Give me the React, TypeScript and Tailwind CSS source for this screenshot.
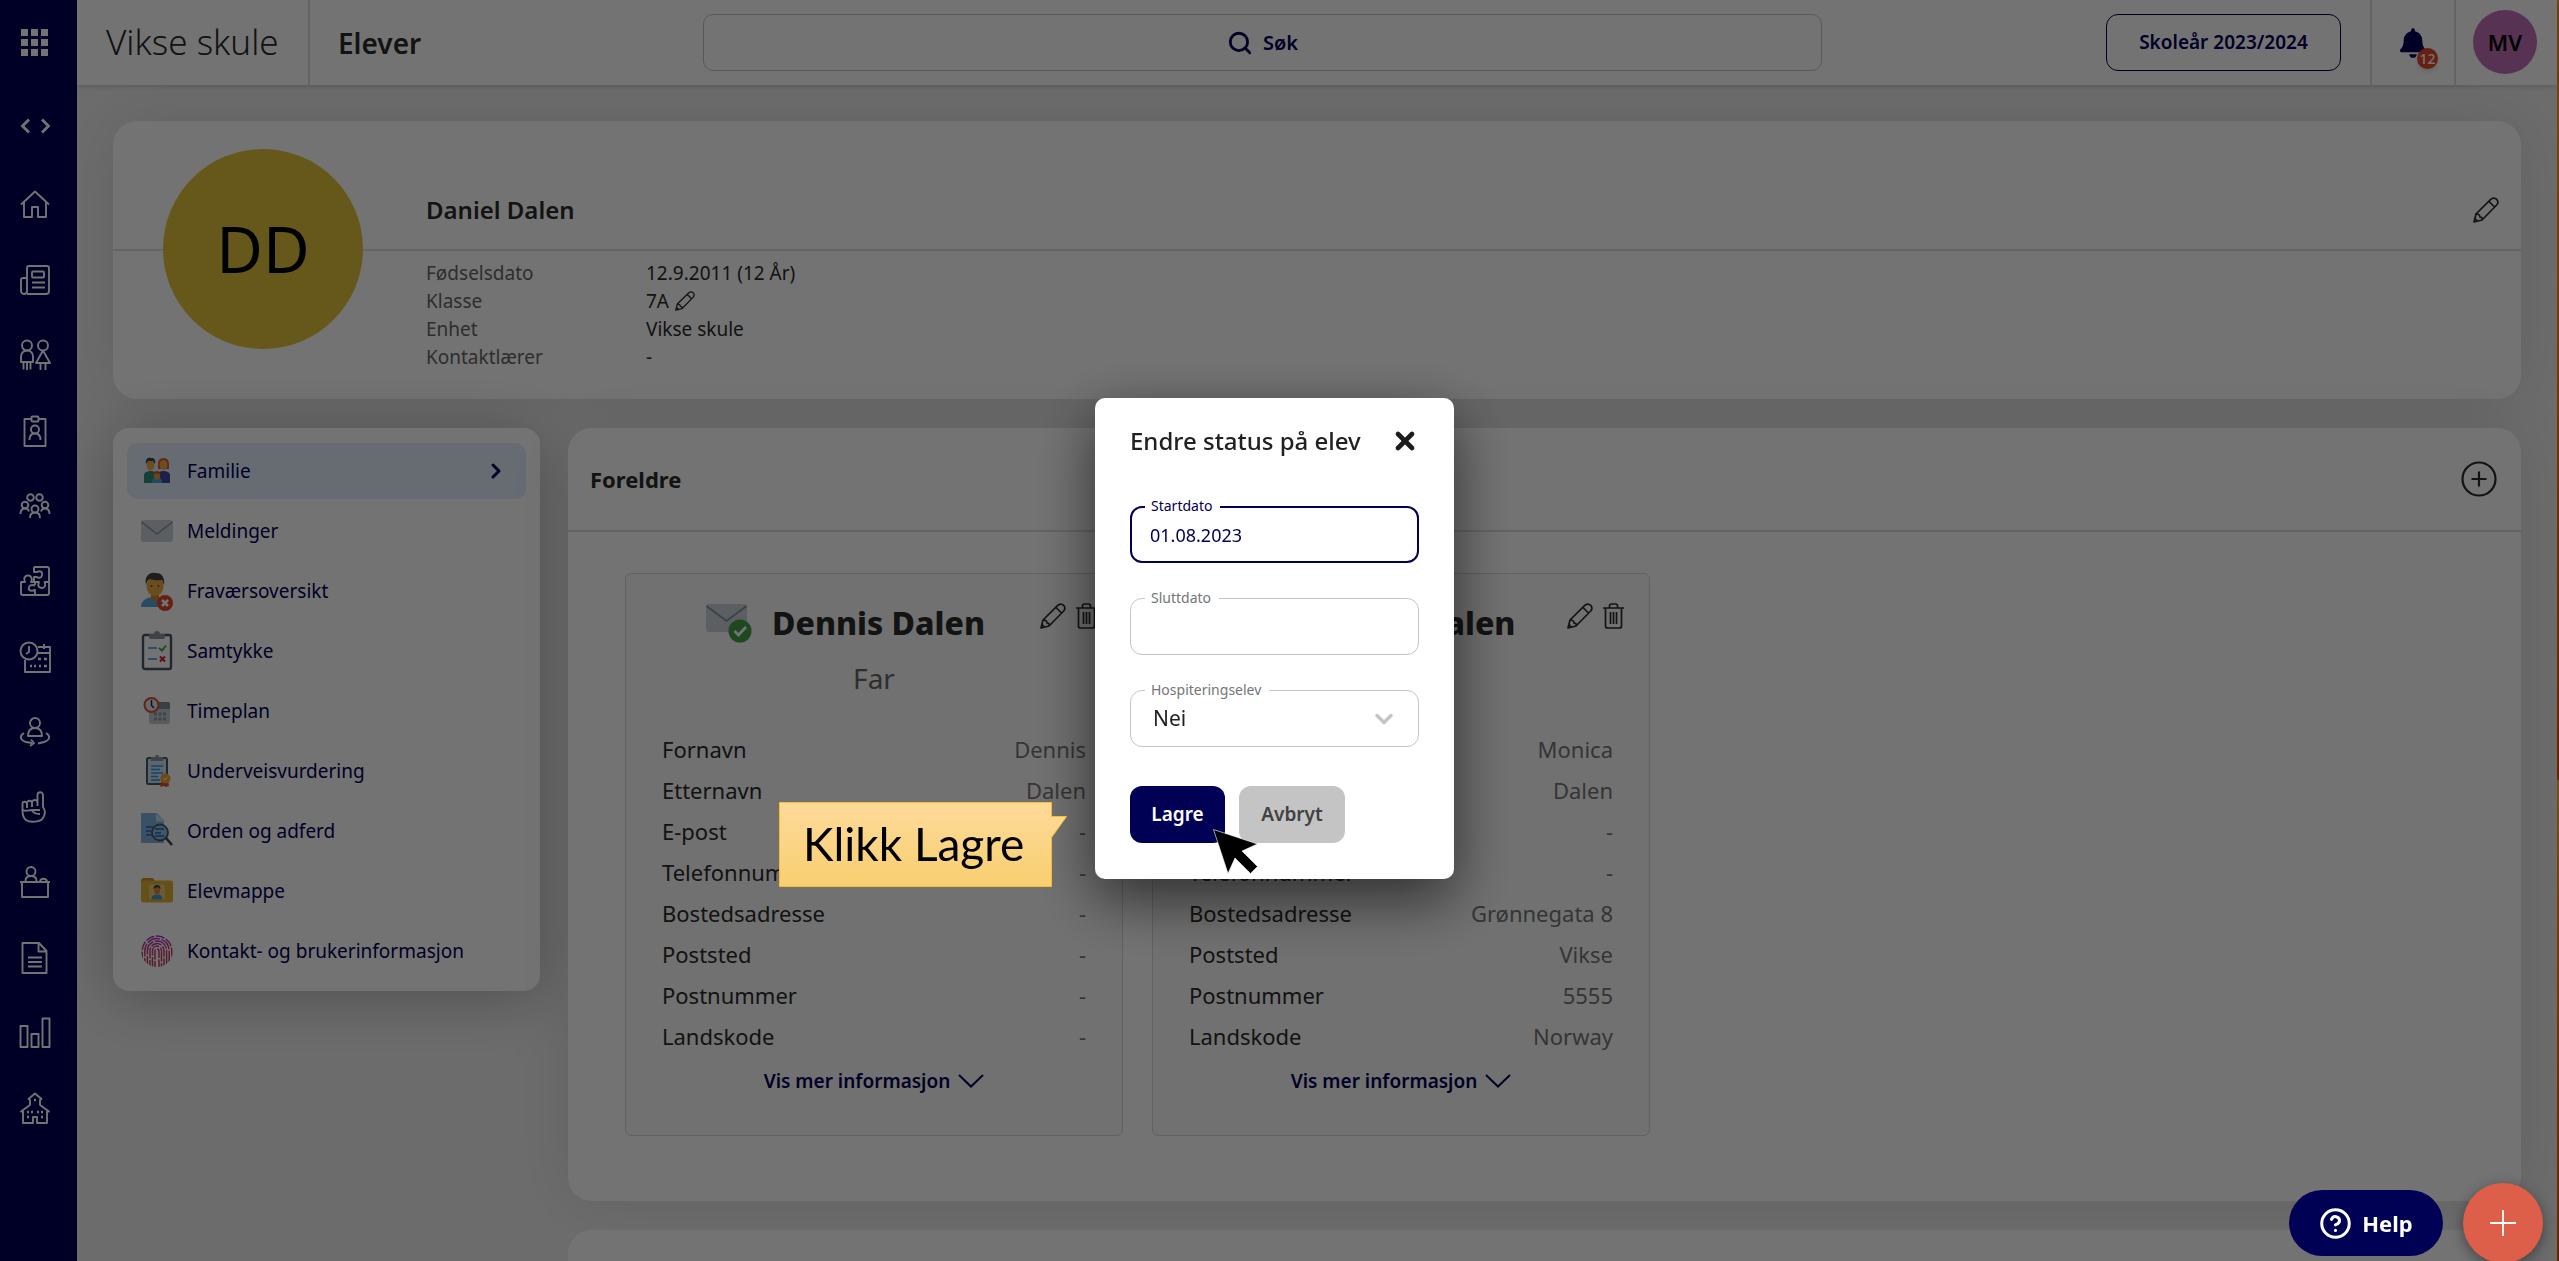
import type { ReactNode } from 'react';
import { ChevronDown, ChevronRight, CircleHelp, Search, X } from 'lucide-react';
import { FaBell } from 'react-icons/fa';

interface NavItem {
  label: string;
  icon: ReactNode;
}

interface Parent {
  name: string;
  relation: string;
  fields: [string, string][];
}

const navItems: NavItem[] = [
  {
    label: 'Hjem',
    icon: <path d="M2 15.500 16 2.500l14 13M5 13v15h8V18h6v10h8V13" />,
  },
  {
    label: 'Nyheter',
    icon: (
      <>
        <path d="M9 30h19a3 3 0 0 0 3-3V4a2 2 0 0 0-2-2H11a2 2 0 0 0-2 2v23a3 3 0 0 1-6 0V16a2 2 0 0 1 2-2h4" transform="translate(-1 0)" />
        <rect x="13" y="7.500" width="12" height="6" rx="1" />
        <path d="M13 18.500h13M13 23.500h13" />
      </>
    ),
  },
  {
    label: 'Elever',
    icon: (
      <>
        <circle cx="8" cy="6.500" r="5" />
        <circle cx="24" cy="6.500" r="5" />
        <path d="M8 11.500c-4 0-6 3-6 6.500v5h2.500v7.500M8 11.500c4 0 6 3 6 6.500v5h-2.500v7.500M4.500 23h7M8 24v7M24 11.500l-7 12.500h14l-7-12.500M21.500 24v7M26.500 24v7" />
      </>
    ),
  },
  {
    label: 'Ansatte',
    icon: (
      <>
        <path d="M12 4H5.500v27h21V4H20" />
        <rect x="12.500" y="1.500" width="7" height="5" rx="1" />
        <circle cx="16" cy="14.500" r="4" />
        <path d="M10.500 25c0-4.500 2-6.500 5.500-6.500s5.500 2 5.500 6.500" />
      </>
    ),
  },
  {
    label: 'Grupper',
    icon: (
      <>
        <circle cx="11.500" cy="7.500" r="3.300" />
        <circle cx="20.500" cy="7.500" r="3.300" />
        <circle cx="6" cy="15" r="3.300" />
        <circle cx="26" cy="15" r="3.300" />
        <circle cx="16" cy="19" r="3.500" />
        <path d="M1.500 24c0-3.500 1.500-5.500 4.500-5.500 2 0 3.500 1 4 3M30.500 24c0-3.500-1.500-5.500-4.500-5.500-2 0-3.500 1-4 3M11 28c0-3.500 1.500-5.500 5-5.500s5 2 5 5.500" />
      </>
    ),
  },
  {
    label: 'Fag',
    icon: (
      <>
        <path d="M15 2h13a2 2 0 0 1 2 2v24a2 2 0 0 1-2 2H4a2 2 0 0 1-2-2V17h4c-2-4 0-6.500 3-6.500s5 3 3 6.500h4v3" />
        <path d="M15 2v5h3c4-2 6 1 5 3.500-1 3-4 2.500-5 1.500h-3v5h5c-2 5 1 6 3 6 3 0 4-3 2.500-6H30M16 30v-5c-5 2-7-.5-6-3 .8-2 3-2.500 6-1.500" />
      </>
    ),
  },
  {
    label: 'Timeplan',
    icon: (
      <>
        <circle cx="10" cy="10" r="8.500" />
        <path d="M10 5v6l-3 2M19 6h12v25H6V19M18 12h13M25 3v5" />
        <path d="M19 18h3M25 18h3M11 25h2M15 25h2M20 25h2M25 25h3" strokeWidth="2.500" />
      </>
    ),
  },
  {
    label: 'Vikar',
    icon: (
      <>
        <circle cx="16" cy="7" r="5" />
        <path d="M9 20c0-5 2-8 7-8s7 3 7 8zM5 17c-5 3-4 7 2 9l6 1M27 17c5 3 4 7-2 9l-6 1.500M12 23.500l3 3.500-4 3" />
      </>
    ),
  },
  {
    label: 'Vurdering',
    icon: (
      <path d="M18.500 15V4a2.700 2.700 0 0 1 5.500 0v12c3 4 2 8 0 11-2 4-13 5-17 2-4-3-3.500-7-3.500-11v-5c0-3 4-3 4.500 0v4M8 12c.5-3 5-3 5 0v4M13 11c1-3 5-2.500 5.500 0M4 19c3 2 6 0 9 0h8M13 19c1 3 4 4 8 4" />
    ),
  },
  {
    label: 'SFO',
    icon: (
      <>
        <circle cx="12" cy="5.500" r="4.500" />
        <path d="M6.500 15c0-3.500 2-5 5.500-5s5.500 1.500 5.500 5M21 15c1-3 6-3 7 0M1 16h30M3 16v15h26V16" />
      </>
    ),
  },
  {
    label: 'Dokumenter',
    icon: <path d="M3.500 1H20l7.500 8v22h-24zM19.500 1v8.500h8M9 15.500h14M9 20h14M9 24.500h14" />,
  },
  {
    label: 'Rapporter',
    icon: <path d="M1.500 9h7v21h-7zM12.500 17h7v13h-7zM23.500 1.500h7V30h-7z" />,
  },
  {
    label: 'Skole',
    icon: (
      <>
        <path d="M16 1.500 9.500 7l1.500 1v5L2 19.500h2V31h10v-6h4v6h10V19.500h2L21 13V8l1.500-1z" />
        <path d="M15 8h2M8 20h2M12 20h2M18 20h2M22 20h2M8 25h2M22 25h2" strokeWidth="2.500" />
      </>
    ),
  },
];

const menuItems: NavItem[] = [
  {
    label: 'Familie',
    icon: (
      <>
        <path d="M3 32V24q0-3 5-4h3q5 1 5 4v8z" fill="#2f8f7c" />
        <path d="M16 32v-8q0-3 5-4h3q5 1 5 4v8z" fill="#4447a8" />
        <path d="M17 18V13q0-6 5.500-6T28 13v5z" fill="#e8552b" />
        <ellipse cx="9.500" cy="14" rx="4" ry="5.500" fill="#f0a84a" />
        <ellipse cx="22.500" cy="14" rx="4" ry="5" fill="#f0a84a" />
        <path d="M5 13c-1-6 3-7 5-6 3-.5 5 2 4 6l-2-3H7z" fill="#444" />
        <path d="M11 32v-2q0-3 5-3t5 3v2z" fill="#45a9d8" />
        <ellipse cx="16" cy="25" rx="3.200" ry="3.800" fill="#e89b4a" />
        <path d="M12.500 24q0-4 3.500-4t3.500 4l-2-1.500h-3z" fill="#d8562b" />
      </>
    ),
  },
  {
    label: 'Meldinger',
    icon: (
      <>
        <rect x="0" y="9" width="32" height="22" rx="2.500" fill="#c9d3da" />
        <path d="m.5 11 15.500 12L31.500 11" fill="none" stroke="#7c8d9c" strokeWidth="1.300" />
      </>
    ),
  },
  {
    label: 'Fraværsoversikt',
    icon: (
      <>
        <path d="M0 36c0-7 6-10 14-10s13 3 14 10z" fill="#55a8e0" />
        <path d="M10 21h8v7q-4 4-8 0z" fill="#d68b30" />
        <ellipse cx="14" cy="15.500" rx="8.500" ry="9.500" fill="#eda944" />
        <path d="M5 14C3 5 9 1 14 2c7-1 10 5 9 12l-2-5q-7 1-12-1-3 1-4 6" fill="#424242" />
        <circle cx="10.500" cy="15" r=".9" fill="#6d4420" />
        <circle cx="17.500" cy="15" r=".9" fill="#6d4420" />
        <circle cx="24" cy="32" r="8" fill="#e0482a" />
        <path d="m21 29 6 6m0-6-6 6" stroke="#fff" strokeWidth="2.600" />
      </>
    ),
  },
  {
    label: 'Samtykke',
    icon: (
      <>
        <rect x="2" y="4" width="28" height="34" rx="2" fill="none" stroke="#465a66" strokeWidth="2.400" />
        <path d="M8 3h5a3 3 0 0 1 6 0h5v3q0 2-2 2H10Q8 8 8 6z" fill="#8795a1" />
        <path d="M7 17h9M7 28h9" stroke="#2b95e6" strokeWidth="1.600" />
        <path d="m18 17 3 2.500 4-5" stroke="#43a047" strokeWidth="2" fill="none" />
        <path d="m19 25.500 5 5m0-5-5 5" stroke="#d81b43" strokeWidth="2" />
      </>
    ),
  },
  {
    label: 'Timeplan',
    icon: (
      <>
        <rect x="8" y="11" width="21" height="22" rx="2" fill="#c5cdd3" />
        <path d="M8 17v-4q0-2 2-2h17q2 0 2 2v5H8z" fill="#808d98" />
        <path d="M13 23h12M13 28h12" stroke="#8a98a3" strokeWidth="3" strokeDasharray="3 1.500" />
        <circle cx="10.500" cy="14" r="7" fill="#e8e8e8" stroke="#d94f3c" strokeWidth="2" />
        <path d="M10.500 9v5.500l2.500 2.500" stroke="#20205c" strokeWidth="1.500" fill="none" />
      </>
    ),
  },
  {
    label: 'Underveisvurdering',
    icon: (
      <>
        <rect x="6" y="7" width="20" height="26" rx="1.500" fill="#cfe2f0" stroke="#465a66" strokeWidth="2" />
        <path d="M10 6h4a2 2 0 0 1 4 0h4v4H10z" fill="#8795a1" />
        <path d="M10 15h12M10 18.500h9M10 22h12M10 25.500h7M10 29h9" stroke="#2b95e6" strokeWidth="1.400" />
        <path d="m21 29-2 7 4-1 2 1 3-1-1-6z" fill="#d8562b" />
        <circle cx="24.500" cy="27.500" r="5" fill="#f0a230" />
        <path d="m22.500 27.500 1.500 1.500 2.500-3" stroke="#fff3c4" fill="none" />
      </>
    ),
  },
  {
    label: 'Orden og adferd',
    icon: (
      <>
        <path d="M0 2h16l7 8v22H0z" fill="#7fb2e0" />
        <path d="m15 2 8 8.500h-8z" fill="#c5def2" />
        <path d="M5 16h7M5 20h5M5 24h7" stroke="#2c62b0" strokeWidth="1.500" />
        <circle cx="19" cy="21.500" r="8" fill="#8fc0ec" stroke="#4a5560" strokeWidth="1.800" />
        <path d="M14 18h9M14 22h6M14 25h9" stroke="#2c62b0" strokeWidth="1.600" />
        <path d="m25 27 6 7" stroke="#3c444c" strokeWidth="2.600" />
      </>
    ),
  },
  {
    label: 'Elevmappe',
    icon: (
      <>
        <path d="M0 10q0-3 3-3h9l2 3h8v10H0z" fill="#d98c2c" />
        <rect x="0" y="9.500" width="32" height="22" rx="2.500" fill="#e0b334" />
        <rect x="8" y="13.500" width="16" height="15" rx="1.500" fill="#eac976" />
        <path d="M10.500 28.500q0-5 5.500-5t5.500 5z" fill="#3f9bd0" />
        <ellipse cx="16" cy="19.500" rx="3" ry="4" fill="#d58c43" />
        <path d="M12.500 18q0-4 3.500-4t3.500 4l-2-1.500h-3z" fill="#444" />
      </>
    ),
  },
  {
    label: 'Kontakt- og brukerinformasjon',
    icon: (
      <>
        <defs>
          <linearGradient id="print" gradientUnits="userSpaceOnUse" x1="0" x2="0" y1="4" y2="36">
            <stop offset="0" stopColor="#b030d0" />
            <stop offset="0.500" stopColor="#c83c78" />
            <stop offset="1" stopColor="#b8404c" />
          </linearGradient>
          <clipPath id="finger">
            <ellipse cx="16" cy="20" rx="16" ry="16" />
          </clipPath>
        </defs>
        <g fill="none" stroke="url(#print)" strokeWidth="1.500" clipPath="url(#finger)">
          <path d="M1.200 40V20a14.800 15 0 0 1 29.600 0v20" strokeDasharray="9 1.500" />
          <path d="M3.800 40V20a12.200 12.400 0 0 1 24.400 0v20" strokeDasharray="13 1.500" />
          <path d="M6.400 40V20a9.600 10 0 0 1 19.200 0v20" strokeDasharray="15 1.500" />
          <path d="M9 40V20a7 7.500 0 0 1 14 0v20" strokeDasharray="11 1.500" />
          <path d="M11.500 40V20a4.500 5 0 0 1 9 0v20" strokeDasharray="14 1.500" />
          <path d="M14 40V20.500a2 2.500 0 0 1 4 0V40" strokeDasharray="10 1.500" />
        </g>
      </>
    ),
  },
];

const parents: Parent[] = [
  {
    name: 'Dennis Dalen',
    relation: 'Far',
    fields: [
      ['Fornavn', 'Dennis'],
      ['Etternavn', 'Dalen'],
      ['E-post', '-'],
      ['Telefonnummer', '-'],
      ['Bostedsadresse', '-'],
      ['Poststed', '-'],
      ['Postnummer', '-'],
      ['Landskode', '-'],
    ],
  },
  {
    name: 'Monica Dalen',
    relation: 'Mor',
    fields: [
      ['Fornavn', 'Monica'],
      ['Etternavn', 'Dalen'],
      ['E-post', '-'],
      ['Telefonnummer', '-'],
      ['Bostedsadresse', 'Grønnegata 8'],
      ['Poststed', 'Vikse'],
      ['Postnummer', '5555'],
      ['Landskode', 'Norway'],
    ],
  },
];

function Pencil({ className }: { className: string }) {
  return (
    <svg viewBox="0 0 26 26" className={className} fill="none" stroke="currentColor" strokeWidth="1.700" strokeLinejoin="round">
      <path d="M1 25l2-8L18 2.200q3-2.400 5.700.2 2.400 2.800 0 5.600L9 23zM16 4.500l5.500 5.500M3 17c3 0 4 1 4 3 2 0 2.500 1 2 3M1 25l3.500-1-2.500-2.500z" />
    </svg>
  );
}

function Trash() {
  return (
    <svg viewBox="0 0 21 26" className="w-[21px] h-[26px]" fill="none" stroke="currentColor" strokeWidth="1.700">
      <path d="M0 5h21M2.500 5v18q0 2 2 2h12q2 0 2-2V5M6.500 5V3q0-2 2-2h4q2 0 2 2v2M7.500 9v12M10.500 9v12M13.500 9v12" />
    </svg>
  );
}

function Sidebar() {
  return (
    <nav className="w-[77px] shrink-0 h-full bg-[#000055] text-white flex flex-col pb-[115px]">
      <button aria-label="Apper" className="h-[85px] pl-[21px]">
        <svg viewBox="0 0 27 27" className="w-[27px] h-[27px]" fill="currentColor">
          {[0, 10, 20].map((y) =>
            [0, 10, 20].map((x) => <rect key={`${x}-${y}`} x={x} y={y} width="7" height="7" />)
          )}
        </svg>
      </button>
      <button aria-label="Utvid meny" className="h-[82px] pl-5">
        <svg viewBox="0 0 32 16" className="w-8 h-4" fill="none" stroke="currentColor" strokeWidth="2.800">
          <path d="M9 1.500 2.500 8 9 14.500M22 1.500 28.500 8 22 14.500" />
        </svg>
      </button>
      {navItems.map((item) => (
        <a key={item.label} href="#" aria-label={item.label} className="flex-1 flex items-center pl-[19px]">
          <svg viewBox="0 0 32 32" className="w-8 h-8" fill="none" stroke="currentColor" strokeWidth="1.900" strokeLinejoin="round">
            {item.icon}
          </svg>
        </a>
      ))}
    </nav>
  );
}

function Header() {
  return (
    <header className="relative z-[1] flex h-[85px] bg-white shadow-[0_1px_6px_rgba(0,0,0,0.2)]">
      <div className="w-[233px] flex items-center pl-[29px] border-r-2 border-[#dddddd] text-[35px] font-light text-[#2b2b2b]">
        Vikse skule
      </div>
      <h1 className="w-[393px] flex items-center pl-7 text-[28px] font-semibold text-[#2b2b2b]">Elever</h1>
      <button className="flex-1 my-[14px] rounded-[10px] border border-[#c4c4c4] flex items-center justify-center gap-[10px] text-xl font-semibold text-[#000055]">
        <Search className="w-[26px] h-[26px]" strokeWidth={2.600} />
        Søk
      </button>
      <button className="w-[235px] my-[14px] ml-[284px] mr-[29px] rounded-xl border border-[#000055] text-[19px] font-semibold text-[#000055]">
        Skoleår 2023/2024
      </button>
      <button aria-label="Varsler" className="relative w-[86px] border-x-2 border-[#dddddd] flex items-center justify-center text-[#000055]">
        <FaBell className="w-[26px] h-8" />
        <span className="absolute left-[45px] top-12 w-[21px] h-[21px] rounded-full bg-[#e0482a] text-white text-sm leading-[21px] font-medium shadow-md">
          12
        </span>
      </button>
      <button className="w-16 h-16 mt-[10px] ml-[17px] mr-[20px] rounded-full bg-[#c36fb8] text-[22px] font-semibold text-black">
        MV
      </button>
    </header>
  );
}

function StudentCard() {
  return (
    <section className="grid grid-cols-[313px_1fr] bg-white rounded-3xl shadow-[0_0_60px_rgba(0,0,0,0.1)] pb-7">
      <div className="z-[1] col-start-1 row-start-1 row-span-2 ml-[50px] mt-7 w-[200px] h-[200px] rounded-full bg-[#e2c43a] flex items-center justify-center text-[64px] text-black">
        DD
      </div>
      <div className="col-start-1 col-span-2 row-start-1 h-[130px] pl-[313px] pr-[22px] pt-[50px] border-b-2 border-[#dddddd] flex items-center justify-between text-[#2b2b2b]">
        <h2 className="text-2xl font-semibold">Daniel Dalen</h2>
        <button aria-label="Rediger elev">
          <Pencil className="w-[26px] h-[26px]" />
        </button>
      </div>
      <dl className="col-start-2 row-start-2 pt-2 grid grid-cols-[220px_1fr] text-[19px] leading-7 text-[#2b2b2b]">
        <dt className="text-[#666]">Fødselsdato</dt>
        <dd>12.9.2011 (12 År)</dd>
        <dt className="text-[#666]">Klasse</dt>
        <dd className="flex items-center gap-[6px]">
          7A
          <button aria-label="Rediger klasse">
            <Pencil className="w-5 h-5" />
          </button>
        </dd>
        <dt className="text-[#666]">Enhet</dt>
        <dd>Vikse skule</dd>
        <dt className="text-[#666]">Kontaktlærer</dt>
        <dd>-</dd>
      </dl>
    </section>
  );
}

function SideMenu() {
  return (
    <nav className="w-[427px] shrink-0 self-start bg-white rounded-2xl px-[14px] pt-[15px] pb-3 flex flex-col gap-1 shadow-[0_6px_60px_rgba(0,0,0,0.28)]">
      {menuItems.map((item, index) => (
        <a
          key={item.label}
          href="#"
          className={`h-14 flex items-center gap-[14px] pl-[14px] pr-[18px] rounded-[10px] text-[19px] text-[#000055] ${index === 0 ? 'bg-[#e4efff]' : ''}`}
        >
          <svg viewBox="0 0 32 40" className="w-8 h-10">
            {item.icon}
          </svg>
          <span className="flex-1">{item.label}</span>
          {index === 0 && <ChevronRight className="w-6 h-6" strokeWidth={3} />}
        </a>
      ))}
    </nav>
  );
}

function ParentCard({ parent }: { parent: Parent }) {
  return (
    <article className="w-[498px] rounded-md border border-[#d8d8d8] bg-[#fafafa] pt-[29px] pb-[30px] text-[#2b2b2b]">
      <div className="flex items-start px-[25px]">
        <div className="flex-1 flex items-center justify-center gap-5">
          <svg viewBox="0 0 46 40" className="w-[46px] h-10">
            <rect x="0" y="1" width="41" height="28" rx="3" fill="#c9d3da" />
            <path d="M.5 3 20.500 18 40.500 3" fill="none" stroke="#7c8d9c" strokeWidth="1.600" />
            <circle cx="34" cy="28" r="11.500" fill="#43a047" />
            <path d="m28.500 28 4 4 7.500-8" fill="none" stroke="#fff" strokeWidth="2.800" />
          </svg>
          <h3 className="text-[32px] leading-10 font-extrabold">{parent.name}</h3>
        </div>
        <div className="flex gap-[10px]">
          <button aria-label={`Rediger ${parent.name}`}>
            <Pencil className="w-[26px] h-[26px]" />
          </button>
          <button aria-label={`Slett ${parent.name}`}>
            <Trash />
          </button>
        </div>
      </div>
      <p className="mt-[17px] text-center text-[28px] leading-9 text-[#666]">{parent.relation}</p>
      <dl className="mt-[33px] px-9 text-[22px] leading-[41px]">
        {parent.fields.map(([label, value]) => (
          <div key={label} className="flex justify-between">
            <dt>{label}</dt>
            <dd className="text-[#777]">{value}</dd>
          </div>
        ))}
      </dl>
      <button className="w-full h-12 flex items-center justify-center gap-2 text-[19px] font-semibold text-[#000055]">
        Vis mer informasjon
        <svg viewBox="0 0 26 14" className="w-[26px] h-[14px]" fill="none" stroke="currentColor" strokeWidth="2">
          <path d="m1 1 12 11.500L25 1" />
        </svg>
      </button>
    </article>
  );
}

function ParentsSection() {
  return (
    <section className="bg-white rounded-3xl shadow-[0_0_60px_rgba(0,0,0,0.1)]">
      <div className="h-[104px] pl-[22px] pr-6 flex items-center justify-between border-b-2 border-[#dddddd] text-[#2b2b2b]">
        <h2 className="text-[22px] font-bold">Foreldre</h2>
        <button aria-label="Legg til forelder">
          <svg viewBox="0 0 36 36" className="w-9 h-9" fill="none" stroke="currentColor" strokeWidth="2.200">
            <circle cx="18" cy="18" r="16.500" />
            <path d="M18 10.500v15M10.500 18h15" />
          </svg>
        </button>
      </div>
      <div className="flex gap-[29px] pt-[41px] pb-[65px] pl-[57px]">
        {parents.map((parent) => (
          <ParentCard key={parent.name} parent={parent} />
        ))}
      </div>
    </section>
  );
}

function StatusDialog() {
  return (
    <div role="dialog" aria-labelledby="dialog-title" className="relative w-[359px] bg-white rounded-[10px] px-[35px] pt-[23px] pb-9 shadow-[0_20px_60px_rgba(0,0,0,0.6)]">
      <div className="flex items-center justify-between h-10">
        <h2 id="dialog-title" className="text-2xl font-medium text-[#212121]">
          Endre status på elev
        </h2>
        <button aria-label="Lukk" className="text-[#1c1c1c]">
          <X className="w-7 h-7" strokeWidth={4} />
        </button>
      </div>

      <div className="relative mt-[45px]">
        <label htmlFor="start" className="absolute left-[15px] -top-[10px] px-[6px] pr-2 bg-white text-sm text-[#000055]">
          Startdato
        </label>
        <input id="start" defaultValue="01.08.2023" className="w-full h-[57px] rounded-xl border-2 border-[#000055] px-[18px] text-lg text-[#000055] outline-none" />
      </div>
      <div className="relative mt-[35px]">
        <label htmlFor="end" className="absolute left-[15px] -top-[10px] px-[6px] pr-2 bg-white text-sm text-[#757575]">
          Sluttdato
        </label>
        <input id="end" className="w-full h-[57px] rounded-xl border border-[#c4c4c4] px-[18px] text-lg outline-none" />
      </div>
      <div className="relative mt-[35px]">
        <label htmlFor="visitor" className="absolute left-[15px] -top-[10px] px-[6px] pr-2 bg-white text-sm text-[#757575]">
          Hospiteringselev
        </label>
        <select id="visitor" className="appearance-none w-full h-[57px] rounded-xl border border-[#c4c4c4] px-[22px] text-[21px] text-[#212121] outline-none">
          <option>Nei</option>
          <option>Ja</option>
        </select>
        <ChevronDown className="absolute right-[21px] top-[15px] w-7 h-7 text-[#c4c4c4] pointer-events-none" strokeWidth={3} />
      </div>

      <div className="flex gap-[14px] mt-[39px]">
        <button className="w-[95px] h-[57px] rounded-xl bg-[#000055] text-[19px] font-semibold text-white">Lagre</button>
        <button className="w-[106px] h-[57px] rounded-xl bg-[#c4c4c4] text-[19px] font-semibold text-[#424242]">Avbryt</button>
      </div>

      {/* Guide step: callout and pointer on the save button */}
      <div className="absolute -left-[316px] top-[404px] w-[289px] h-[85px]">
        <svg viewBox="0 0 289 85" className="absolute inset-0 w-full h-full">
          <defs>
            <linearGradient id="callout" x1="0" x2="0" y1="0" y2="1">
              <stop offset="0" stopColor="#fdda9a" />
              <stop offset="1" stopColor="#f9cf70" />
            </linearGradient>
          </defs>
          <path d="M.5.5h272v14h15l-15 21v49H.5z" fill="url(#callout)" stroke="#fbbc2c" />
        </svg>
        <p className="relative pl-6 font-['Lato','Noto_Sans',sans-serif] text-[46px] leading-[84px] text-black">Klikk Lagre</p>
      </div>
      <svg viewBox="0 0 45 45" className="absolute left-[118px] top-[431px] w-[45px] h-[45px]">
        <path d="M.5.5 44.500 15 29 22 44.500 37.500 37.500 44.500 22 29 15 44.500z" fill="#000" stroke="#fff" strokeWidth=".6" />
      </svg>
    </div>
  );
}

export default function App() {
  return (
    <div className="flex h-screen overflow-hidden bg-[#f0f0f0] font-['Noto_Sans',sans-serif]">
      <Sidebar />
      <div className="flex-1 min-w-0">
        <Header />
        <main className="pt-9 px-9 flex flex-col gap-[29px]">
          <StudentCard />
          <div className="flex gap-7">
            <SideMenu />
            <div className="flex-1 flex flex-col gap-[29px]">
              <ParentsSection />
              <section className="h-[104px] bg-white rounded-3xl" />
            </div>
          </div>
        </main>
      </div>
      <div className="w-[2px] shrink-0 bg-[linear-gradient(to_bottom,#ff9a40_0%,#ff8a20_20%,#e05010_61.800%,#ffb040_61.900%,#ff8020_75%,#d05a10_100%)]" />

      <div className="fixed inset-0 z-10 flex items-center justify-center pt-4 pr-[10px] bg-black/55">
        <StatusDialog />
      </div>

      <div className="fixed z-20 right-4 -bottom-[2px] flex items-center gap-5">
        <button className="w-[154px] h-[66px] rounded-full bg-[#000055] flex items-center justify-center gap-[10px] text-[22px] font-bold text-white">
          <CircleHelp className="w-[33px] h-[33px]" strokeWidth={2.200} />
          Help
        </button>
        <button aria-label="Ny" className="w-20 h-20 rounded-full bg-[#de5f49] text-white flex items-center justify-center shadow-[0_4px_14px_rgba(0,0,0,0.4)]">
          <svg viewBox="0 0 26 26" className="w-[26px] h-[26px]" stroke="currentColor" strokeWidth="1.800">
            <path d="M13 0v26M0 13h26" />
          </svg>
        </button>
      </div>
    </div>
  );
}
